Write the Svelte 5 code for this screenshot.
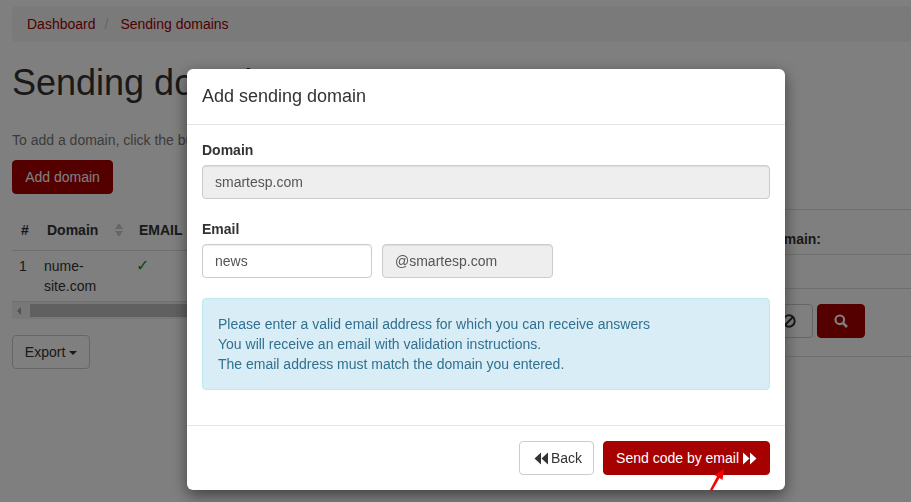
<script>
  const hint = [
    'Please enter a valid email address for which you can receive answers',
    'You will receive an email with validation instructions.',
    'The email address must match the domain you entered.'
  ];
</script>

<div class="page">
  <nav class="crumbs">
    <a href="#d">Dashboard</a><span class="sep">/</span><a href="#s">Sending domains</a>
  </nav>
  <h1>Sending domains</h1>
  <p class="lead">To add a domain, click the button below.</p>
  <button class="btn primary add">Add domain</button>

  <div class="columns">
    <div class="left">
      <table>
        <thead>
          <tr>
            <th class="c1">#</th>
            <th class="c2">Domain<span class="sort"></span></th>
            <th class="c3">EMAIL</th>
          </tr>
        </thead>
        <tbody>
          <tr>
            <td class="num">1</td>
            <td>nume-<br />site.com</td>
            <td class="ok">✓</td>
          </tr>
        </tbody>
      </table>
      <div class="scrollbar">
        <span class="arrow"></span>
        <span class="thumb"></span>
      </div>
      <button class="btn export">Export <span class="caret"></span></button>
    </div>
    <aside class="right">
      <div class="r-head">Search domain:</div>
      <div class="r-row"></div>
      <div class="r-actions">
        <button class="btn icon">
          <svg width="14" height="14" viewBox="0 0 14 14"><circle cx="7" cy="7" r="5.700" fill="none" stroke="currentColor" stroke-width="2" /><path d="M3 11 11 3" stroke="currentColor" stroke-width="2" /></svg>
        </button>
        <button class="btn primary icon search">
          <svg width="14" height="14" viewBox="0 0 14 14"><circle cx="5.800" cy="5.800" r="4.300" fill="none" stroke="currentColor" stroke-width="2.200" /><path d="M8.800 8.800 13 13" stroke="currentColor" stroke-width="2.600" /></svg>
        </button>
      </div>
    </aside>
  </div>
</div>

<div class="backdrop">
  <div class="modal">
    <header>Add sending domain</header>
    <div class="body">
      <label for="dom">Domain</label>
      <input id="dom" class="field" value="smartesp.com" disabled />
      <label for="mail" class="second">Email</label>
      <div class="email">
        <input id="mail" class="field" value="news" />
        <input class="field" value="@smartesp.com" aria-label="Email domain" disabled />
      </div>
      <div class="alert">
        {#each hint as line}<div>{line}</div>{/each}
      </div>
    </div>
    <footer>
      <button class="btn back">
        <svg width="14" height="13" viewBox="0 0 14 13"><path fill="currentColor" d="M7 .5v12L.5 6.500zM14 .5v12L7.500 6.500z" /></svg>
        Back
      </button>
      <div class="send-wrap">
        <button class="btn send">
          Send code by email
          <svg width="14" height="13" viewBox="0 0 14 13"><path fill="currentColor" d="M0 .5v12l6.500-6zM7 .5v12l6.500-6z" /></svg>
        </button>
        <svg class="pointer" width="16" height="24" viewBox="0 0 16 24"><path fill="#f00" d="M15 1 13.500 12 10.500 10 3 23 1 21.800 8 8.500 5.500 7z" /></svg>
      </div>
    </footer>
  </div>
</div>

<style>
  :global(body) {
    margin: 0;
    background: #fff;
    overflow: hidden;
    font-family: "Liberation Sans", Arial, sans-serif;
    font-size: 14px;
    line-height: 20px;
    color: #333;
  }
  .page {
    padding: 6px 0 0 12px;
    height: 496px;
    overflow: hidden;
  }
  .crumbs {
    height: 36px;
    padding: 8px 15px;
    box-sizing: border-box;
    background: #f5f5f5;
    border-radius: 4px;
  }
  .crumbs a {
    color: #a00000;
    text-decoration: none;
  }
  .sep {
    color: #ccc;
    padding: 0 12px 0 9px;
  }
  h1 {
    margin: 21px 0 0;
    font-size: 36px;
    line-height: 40px;
    font-weight: 400;
  }
  .lead {
    margin: 27px 0 0;
    color: #777;
  }
  .btn {
    font: inherit;
    color: #333;
    background: #fff;
    border: 1px solid #ccc;
    border-radius: 4px;
    padding: 6px 12px;
    height: 34px;
    box-sizing: border-box;
  }
  .primary {
    background: #a80000;
    border-color: #a80000;
    color: #fff;
  }
  .add {
    display: block;
    margin-top: 10px;
    width: 101px;
    padding: 0;
  }
  .columns {
    display: flex;
    justify-content: space-between;
    margin-top: 15px;
  }
  .left {
    width: 400px;
  }
  table {
    border-collapse: collapse;
    width: 100%;
    table-layout: fixed;
  }
  th {
    text-align: left;
    padding: 11px 0 10px 3px;
    height: 20px;
    border-bottom: 1px solid #ddd;
    white-space: nowrap;
  }
  td {
    padding: 5px 0;
    vertical-align: top;
    border-bottom: 1px solid #ddd;
  }
  th.c1 { width: 32px; padding-left: 9px; box-sizing: border-box; }
  .c2 { width: 89px; }
  .num { padding-left: 7px; }
  .sort {
    display: inline-block;
    width: 8px;
    height: 14px;
    margin-left: 17px;
    vertical-align: -2px;
    background:
      linear-gradient(to bottom right, transparent 50%, #ccc 50%) left top / 4px 6px no-repeat,
      linear-gradient(to bottom left, transparent 50%, #ccc 50%) right top / 4px 6px no-repeat,
      linear-gradient(to top right, transparent 50%, #ccc 50%) left bottom / 4px 6px no-repeat,
      linear-gradient(to top left, transparent 50%, #ccc 50%) right bottom / 4px 6px no-repeat;
  }
  .ok {
    color: #1a8a1a;
    font-family: "DejaVu Sans", sans-serif;
    font-size: 16px;
    font-weight: 700;
    line-height: 18px;
    padding-top: 6px;
  }
  .scrollbar {
    height: 17px;
    background: #f1f1f1;
    display: flex;
    align-items: center;
  }
  .arrow {
    width: 0;
    height: 0;
    margin: 0 6px 0 5px;
    border: 4px solid transparent;
    border-left-width: 0;
    border-right: 4px solid #a3a3a3;
  }
  .thumb {
    height: 13px;
    flex: 1;
    background: #c1c1c1;
    margin-left: 3px;
  }
  .export {
    display: block;
    margin-top: 16px;
    width: 78px;
    padding: 0;
  }
  .caret {
    display: inline-block;
    width: 0;
    height: 0;
    vertical-align: middle;
    border-top: 4px solid;
    border-left: 4px solid transparent;
    border-right: 4px solid transparent;
  }
  .right {
    width: 240px;
    border-top: 1px solid #ddd;
  }
  .r-head {
    height: 45px;
    padding: 19px 0 0 45px;
    box-sizing: border-box;
    border-bottom: 1px solid #ddd;
    font-weight: 700;
  }
  .r-row {
    height: 33px;
    border-bottom: 1px solid #ddd;
  }
  .r-actions {
    display: flex;
    justify-content: flex-end;
    gap: 4px;
    height: 68px;
    padding: 15px 46px 0 0;
    box-sizing: border-box;
    border-bottom: 1px solid #ddd;
  }
  .icon {
    width: 48px;
    padding: 0;
    display: flex;
    align-items: center;
    justify-content: center;
  }
  .backdrop {
    position: fixed;
    inset: 0;
    background: rgba(0, 0, 0, 0.5);
  }
  .modal {
    position: absolute;
    left: 187px;
    top: 69px;
    width: 598px;
    height: 421px;
    box-sizing: border-box;
    background: #fff;
    border-radius: 6px;
    box-shadow: 0 5px 15px rgba(0, 0, 0, 0.5);
    display: flex;
    flex-direction: column;
  }
  header {
    height: 56px;
    box-sizing: border-box;
    padding: 15px;
    font-size: 18px;
    line-height: 25px;
    border-bottom: 1px solid #e5e5e5;
  }
  .body {
    flex: 1;
    padding: 15px;
  }
  label {
    display: block;
    font-weight: 700;
    margin-bottom: 5px;
  }
  .second {
    margin-top: 20px;
  }
  .field {
    display: block;
    width: 100%;
    height: 34px;
    box-sizing: border-box;
    padding: 6px 12px;
    font: inherit;
    color: #555;
    background: #fff;
    border: 1px solid #ccc;
    border-radius: 4px;
    box-shadow: inset 0 1px 1px rgba(0, 0, 0, 0.075);
    outline: none;
  }
  .field:disabled {
    background: #eee;
    opacity: 1;
  }
  .email {
    display: flex;
    gap: 10px;
  }
  .email .field {
    width: 170px;
  }
  .email .field:disabled {
    width: 171px;
  }
  .alert {
    margin-top: 20px;
    padding: 15px;
    height: 92px;
    box-sizing: border-box;
    background: #d9edf7;
    border: 1px solid #bce8f1;
    border-radius: 4px;
    color: #31708f;
  }
  footer {
    height: 65px;
    box-sizing: border-box;
    padding: 15px;
    border-top: 1px solid #e5e5e5;
    display: flex;
    justify-content: flex-end;
    gap: 9px;
  }
  .back {
    width: 75px;
    padding: 0 0 0 14px;
    display: flex;
    align-items: center;
    gap: 3px;
  }
  .send-wrap {
    position: relative;
  }
  .send {
    width: 167px;
    padding: 0;
    background: #a60000;
    border-color: #a60000;
    color: #fff;
    white-space: nowrap;
  }
  .send svg {
    vertical-align: -2px;
  }
  .pointer {
    position: absolute;
    left: 106px;
    top: 27px;
  }
</style>
